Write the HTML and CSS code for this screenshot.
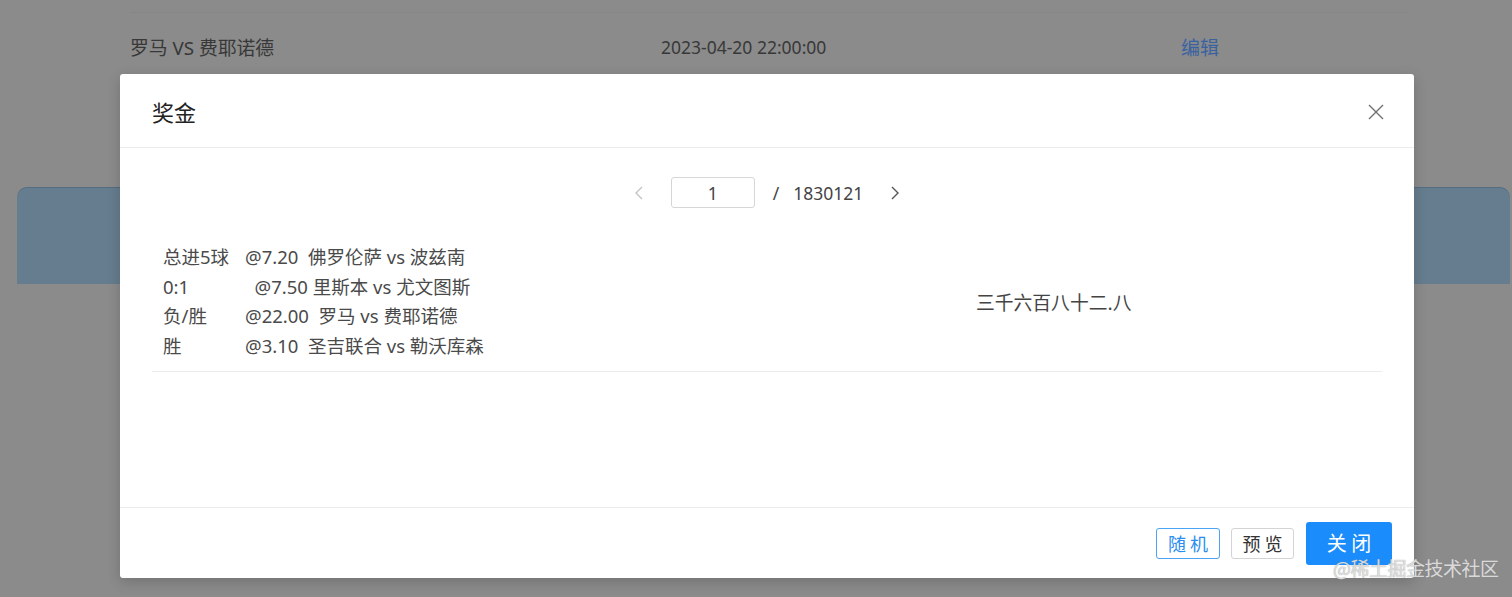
FILE: index.html
```html
<!DOCTYPE html>
<html lang="zh-CN">
<head>
<meta charset="utf-8">
<title>奖金</title>
<link rel="stylesheet" href="styles.css">
</head>
<body>
<div class="page">
  <div class="bg-table">
    <div class="bg-row">
      <span class="bg-cell bg-name">罗马 VS 费耶诺德</span>
      <span class="bg-cell bg-date">2023-04-20 22:00:00</span>
      <span class="bg-cell bg-edit">编辑</span>
    </div>
  </div>
  <div class="bg-banner"></div>
</div>

<div class="modal">
  <div class="modal-header">
    <div class="modal-title">奖金</div>
    <span class="modal-close">
      <svg width="16" height="16" viewBox="0 0 16 16"><path d="M1 1 L15 15 M15 1 L1 15" stroke="#6f6f6f" stroke-width="1.4" fill="none"/></svg>
    </span>
  </div>
  <div class="modal-body">
    <div class="pager">
      <span class="pager-arrow disabled">
        <svg width="12" height="14" viewBox="0 0 12 14"><path d="M9 1 L3 7 L9 13" stroke="#c4c4c4" stroke-width="1.4" fill="none"/></svg>
      </span>
      <span class="pager-input">1</span>
      <span class="pager-slash">/</span>
      <span class="pager-total">1830121</span>
      <span class="pager-arrow">
        <svg width="12" height="14" viewBox="0 0 12 14"><path d="M3 1 L9 7 L3 13" stroke="#555" stroke-width="1.4" fill="none"/></svg>
      </span>
    </div>
    <div class="bet-row">
      <div class="bet-lines">
        <div class="bet-line"><span class="bet-label">总进5球</span><span class="bet-text">@7.20  佛罗伦萨 vs 波兹南</span></div>
        <div class="bet-line"><span class="bet-label">0:1</span><span class="bet-text">  @7.50 里斯本 vs 尤文图斯</span></div>
        <div class="bet-line"><span class="bet-label">负/胜</span><span class="bet-text">@22.00  罗马 vs 费耶诺德</span></div>
        <div class="bet-line"><span class="bet-label">胜</span><span class="bet-text">@3.10  圣吉联合 vs 勒沃库森</span></div>
      </div>
      <div class="bet-amount">三千六百八十二.八</div>
    </div>
  </div>
  <div class="modal-footer">
    <button class="btn btn-outline-primary">随 机</button>
    <button class="btn btn-default">预 览</button>
    <button class="btn btn-primary">关 闭</button>
  </div>
</div>

<div class="watermark">@稀土掘金技术社区</div>
</body>
</html>
```

FILE: styles.css
```css
html, body {
  margin: 0;
  padding: 0;
}
body {
  width: 1512px;
  height: 597px;
  overflow: hidden;
  background: #8b8b8b;
  font-family: "Noto Sans", "Noto Sans CJK SC", sans-serif;
  color: #3b3b3b;
  position: relative;
}
.page {
  padding-top: 12px;
}
.bg-table {
  margin-left: 130px;
  width: 1278px;
  border-top: 1px solid #868686;
}
.bg-row {
  display: flex;
  align-items: center;
  height: 68px;
  font-size: 18.8px;
  color: #383838;
}
.bg-name {
  width: 531px;
}
.bg-date {
  width: 520px;
  font-size: 17.5px;
}
.bg-edit {
  color: #3a62a0;
  font-size: 19px;
}
.bg-banner {
  margin: 106px 2px 0 17px;
  height: 96px;
  border-radius: 10px 10px 0 0;
  background: #667d8f;
  border-top: 1px solid #546d80;
}

.modal {
  position: absolute;
  left: 120px;
  top: 74px;
  width: 1294px;
  height: 504px;
  background: #fff;
  border-radius: 3px;
  box-shadow: 0 4px 14px rgba(0,0,0,0.18);
  display: flex;
  flex-direction: column;
}
.modal-header {
  height: 73px;
  border-bottom: 1px solid #ececec;
  display: flex;
  align-items: center;
  justify-content: space-between;
  padding: 0 30px 0 32px;
}
.modal-title {
  font-size: 22px;
  color: #222;
  font-family: "Noto Sans CJK SC", sans-serif;
}
.modal-close {
  display: flex;
  width: 16px;
  height: 16px;
  margin-top: 2px;
}
.modal-body {
  flex: 1;
  padding: 29px 32px 0;
}
.pager {
  display: flex;
  align-items: center;
  justify-content: center;
  height: 31px;
  font-size: 17.5px;
  color: #444;
}
.pager-arrow {
  display: flex;
  width: 12px;
  height: 14px;
}
.pager-arrow.disabled {
  margin-right: 26px;
}
.pager-input {
  width: 82px;
  height: 29px;
  border: 1px solid #d6d6d6;
  border-radius: 3px;
  display: flex;
  align-items: center;
  justify-content: center;
  color: #444;
}
.pager-slash {
  margin: 0 14px 0 18px;
}
.pager-total {
  margin-right: 26px;
}
.bet-row {
  margin-top: 24px;
  display: grid;
  grid-template-columns: 814px 1fr;
  align-items: center;
  padding: 10px 0;
  border-bottom: 1px solid #ececec;
}
.bet-lines {
  padding-left: 11px;
}
.bet-line {
  display: flex;
  font-size: 18.5px;
  line-height: 29.7px;
  color: #4a4a4a;
  white-space: pre;
}
.bet-label {
  width: 82px;
  flex: none;
}
.bet-amount {
  padding-left: 10px;
  font-size: 18.8px;
  color: #444;
  font-family: "Noto Sans CJK SC", sans-serif;
}
.modal-footer {
  height: 70px;
  border-top: 1px solid #ececec;
  display: flex;
  align-items: center;
  justify-content: flex-end;
  gap: 11px;
  padding-right: 22px;
}
.btn {
  font-family: "Noto Sans CJK SC", sans-serif;
  border-radius: 3px;
  background: #fff;
  padding: 0;
  cursor: pointer;
  white-space: pre;
}
.btn-outline-primary {
  width: 64px;
  height: 31px;
  border: 1px solid #4ba3f5;
  color: #2a8ef0;
  font-size: 18px;
}
.btn-default {
  width: 63px;
  height: 31px;
  border: 1px solid #d4d4d4;
  color: #333;
  font-size: 18px;
}
.btn-primary {
  width: 86px;
  height: 43px;
  border: none;
  background: #1a8cfc;
  color: #fff;
  font-size: 20px;
  line-height: 1;
  margin-left: 1px;
}
.watermark {
  position: absolute;
  left: 1333px;
  top: 558px;
  line-height: 19px;
  font-family: "Noto Sans CJK SC", sans-serif;
  font-size: 19px;
  color: rgba(240,240,240,0.8);
  text-shadow: 0 0 1px #888;
  letter-spacing: -0.5px;
}
```
